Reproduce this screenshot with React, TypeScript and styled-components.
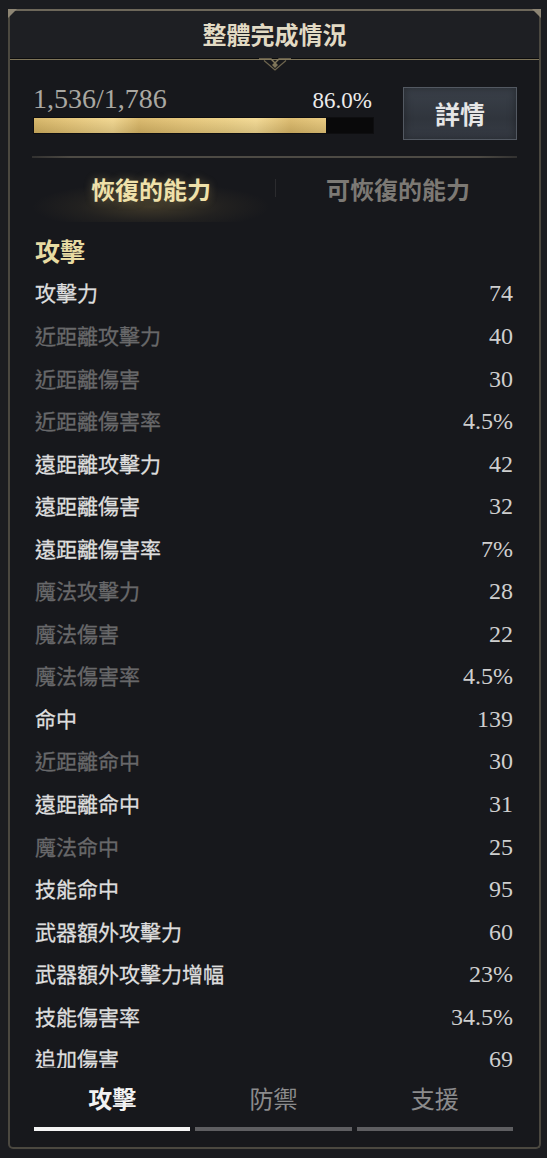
import React from "react";
import styled, { createGlobalStyle } from "styled-components";

const CJK = `"Noto Sans CJK TC", "Noto Sans CJK SC", sans-serif`;
const SERIF = `"Liberation Serif", "DejaVu Serif", serif`;

const Global = createGlobalStyle`
  html, body { margin: 0; padding: 0; background: #1b1c20; }
  body { font-family: ${CJK}; }
  * { box-sizing: border-box; }
`;

const Page = styled.div`
  width: 547px;
  height: 1158px;
  padding: 9px 6px 0 8px;
  background: #1b1c20;
`;

const Frame = styled.div`
  position: relative;
  width: 533px;
  height: 1140px;
  border: 2px solid #4b4840;
  border-top-color: #6d675a;
  border-radius: 0 0 5px 5px;
  background: #17181c;
  display: flex;
  flex-direction: column;
  &::before, &::after {
    content: "";
    position: absolute;
    top: -2px;
    width: 0;
    height: 0;
    border-top: 9px solid #8d8574;
  }
  &::before { left: -2px; border-right: 9px solid transparent; }
  &::after { right: -2px; border-left: 9px solid transparent; }
`;

const Header = styled.div`
  height: 47px;
  padding-bottom: 3px;
  display: flex;
  align-items: center;
  justify-content: center;
  background: #1e1f23;
`;

const Title = styled.div`
  font-family: ${CJK};
  font-weight: 700;
  font-size: 24px;
  color: #e2dac4;
`;

const Ornament = styled.div`
  position: relative;
  height: 2px;
  border-top: 1px solid #0c0c0d;
  background: #7e7459;
  & > svg {
    position: absolute;
    left: 50%;
    top: -1px;
    transform: translateX(-50%);
  }
`;

const Progress = styled.div`
  display: flex;
  align-items: flex-start;
  padding: 27px 22px 0 23px;
  gap: 29px;
`;

const ProgressCol = styled.div`
  width: 341px;
  display: flex;
  flex-direction: column;
  gap: 6px;
`;

const CountRow = styled.div`
  display: flex;
  align-items: baseline;
  justify-content: space-between;
  padding-right: 2px;
  height: 24px;
`;

const Count = styled.span`
  font-family: ${SERIF};
  font-size: 28px;
  line-height: 24px;
  color: #aaa8a2;
`;

const Percent = styled.span`
  font-family: ${SERIF};
  font-size: 23px;
  line-height: 24px;
  color: #ececec;
`;

const Bar = styled.div`
  height: 17px;
  background: #09090a;
  border: 1px solid #0e0e10;
  overflow: hidden;
`;

const Fill = styled.div`
  height: 100%;
  background:
    linear-gradient(180deg, rgba(255,255,255,0.08), rgba(0,0,0,0.12)),
    linear-gradient(90deg, #d6b462 0%, #e5c474 12%, #f2d68c 27%, #dab766 36%, #e7c676 52%, #edd083 66%, #f4d990 76%, #dcb968 88%, #e9c97a 100%);
`;

const DetailButton = styled.button`
  width: 114px;
  height: 53px;
  border: 1px solid #535962;
  background: linear-gradient(180deg, #3a4049 0%, #30353d 60%, #363b44 100%);
  box-shadow: inset 0 0 8px rgba(0,0,0,0.35);
  color: #e6e6e6;
  font-family: ${CJK};
  font-weight: 700;
  font-size: 25px;
  padding: 0 0 2px 0;
  cursor: pointer;
`;

const Rule = styled.div`
  margin: 16px 22px 0 22px;
  height: 2px;
  background: linear-gradient(90deg, rgba(90,86,78,0.4), #4d4a44 8%, #4d4a44 92%, rgba(90,86,78,0.4));
`;

const TopTabs = styled.div`
  height: 64px;
  display: grid;
  grid-template-columns: 248px 1px 244px;
  align-items: center;
  padding-left: 17px;
`;

const TopTab = styled.div<{ $active?: boolean }>`
  height: 100%;
  padding-bottom: 4px;
  display: flex;
  align-items: center;
  justify-content: center;
  font-family: ${CJK};
  font-weight: 700;
  font-size: 24px;
  color: ${(p) => (p.$active ? "#efe1aa" : "#7c7974")};
  text-shadow: ${(p) => (p.$active ? "0 0 8px rgba(230,200,120,0.35)" : "none")};
  background: ${(p) =>
    p.$active
      ? "radial-gradient(ellipse 48% 38% at 50% 76%, rgba(176,148,80,0.26), rgba(176,148,80,0.07) 60%, rgba(0,0,0,0) 100%)"
      : "none"};
`;

const TabSep = styled.div`
  height: 18px;
  margin-bottom: 4px;
  background: #2b2b2e;
`;

const List = styled.div`
  height: 846px;
  overflow: hidden;
  padding: 8px 26px 0 25px;
`;

const SectionTitle = styled.div`
  height: 40px;
  margin-bottom: 2.7px;
  display: flex;
  align-items: center;
  font-family: ${CJK};
  font-weight: 700;
  font-size: 25px;
  color: #e7dba2;
`;

const Row = styled.div`
  height: 42.55px;
  display: flex;
  align-items: center;
  justify-content: space-between;
`;

const Label = styled.span<{ $dim?: boolean }>`
  margin-bottom: 3px;
  font-family: ${CJK};
  font-weight: 400;
  font-size: 21px;
  -webkit-text-stroke: 0.3px currentColor;
  color: ${(p) => (p.$dim ? "#68686a" : "#dedede")};
`;

const Value = styled.span`
  font-family: ${SERIF};
  font-size: 24px;
  color: #cfcfcf;
`;

const BottomTabs = styled.div`
  display: grid;
  grid-template-columns: repeat(3, 1fr);
  gap: 5px;
  padding: 6px 26px 16px 24px;
`;

const BottomTab = styled.div`
  display: flex;
  flex-direction: column;
  align-items: stretch;
`;

const BottomLabel = styled.div<{ $active?: boolean }>`
  height: 52px;
  padding-bottom: 5px;
  display: flex;
  align-items: center;
  justify-content: center;
  font-family: ${CJK};
  font-weight: ${(p) => (p.$active ? 700 : 400)};
  font-size: 24px;
  color: ${(p) => (p.$active ? "#f2f2f2" : "#8b8b8c")};
`;

const Underline = styled.div<{ $active?: boolean }>`
  margin-top: 1px;
  height: 4px;
  background: ${(p) => (p.$active ? "#f4f4f4" : "#5e5e61")};
`;

type Stat = [string, string, boolean];

const stats: Stat[] = [
  ["攻擊力", "74", true],
  ["近距離攻擊力", "40", false],
  ["近距離傷害", "30", false],
  ["近距離傷害率", "4.5%", false],
  ["遠距離攻擊力", "42", true],
  ["遠距離傷害", "32", true],
  ["遠距離傷害率", "7%", true],
  ["魔法攻擊力", "28", false],
  ["魔法傷害", "22", false],
  ["魔法傷害率", "4.5%", false],
  ["命中", "139", true],
  ["近距離命中", "30", false],
  ["遠距離命中", "31", true],
  ["魔法命中", "25", false],
  ["技能命中", "95", true],
  ["武器額外攻擊力", "60", true],
  ["武器額外攻擊力增幅", "23%", true],
  ["技能傷害率", "34.5%", true],
  ["追加傷害", "69", true],
];

const bottomTabs = ["攻擊", "防禦", "支援"];

export default function App() {
  const current = 1536;
  const total = 1786;
  const pct = (current / total) * 100;
  return (
    <Page>
      <Global />
      <Frame>
        <Header>
          <Title>整體完成情況</Title>
        </Header>
        <Ornament>
          <svg width="32" height="14" viewBox="0 0 32 14">
            <path d="M0 1 L12 1 L16 5 L20 1 L32 1" fill="none" stroke="#857a5d" strokeWidth="1.4" />
            <path d="M5 2.5 L16 12 L27 2.5" fill="none" stroke="#6f664f" strokeWidth="1.2" />
            <path d="M16 4 L19 7 L16 10 L13 7 Z" fill="#7e7459" />
          </svg>
        </Ornament>
        <Progress>
          <ProgressCol>
            <CountRow>
              <Count>1,536/1,786</Count>
              <Percent>86.0%</Percent>
            </CountRow>
            <Bar>
              <Fill style={{ width: `${pct}%` }} />
            </Bar>
          </ProgressCol>
          <DetailButton>詳情</DetailButton>
        </Progress>
        <Rule />
        <TopTabs>
          <TopTab $active>恢復的能力</TopTab>
          <TabSep />
          <TopTab>可恢復的能力</TopTab>
        </TopTabs>
        <List>
          <SectionTitle>攻擊</SectionTitle>
          {stats.map(([label, value, bright]) => (
            <Row key={label}>
              <Label $dim={!bright}>{label}</Label>
              <Value>{value}</Value>
            </Row>
          ))}
        </List>
        <BottomTabs>
          {bottomTabs.map((t, i) => (
            <BottomTab key={t}>
              <BottomLabel $active={i === 0}>{t}</BottomLabel>
              <Underline $active={i === 0} />
            </BottomTab>
          ))}
        </BottomTabs>
      </Frame>
    </Page>
  );
}
